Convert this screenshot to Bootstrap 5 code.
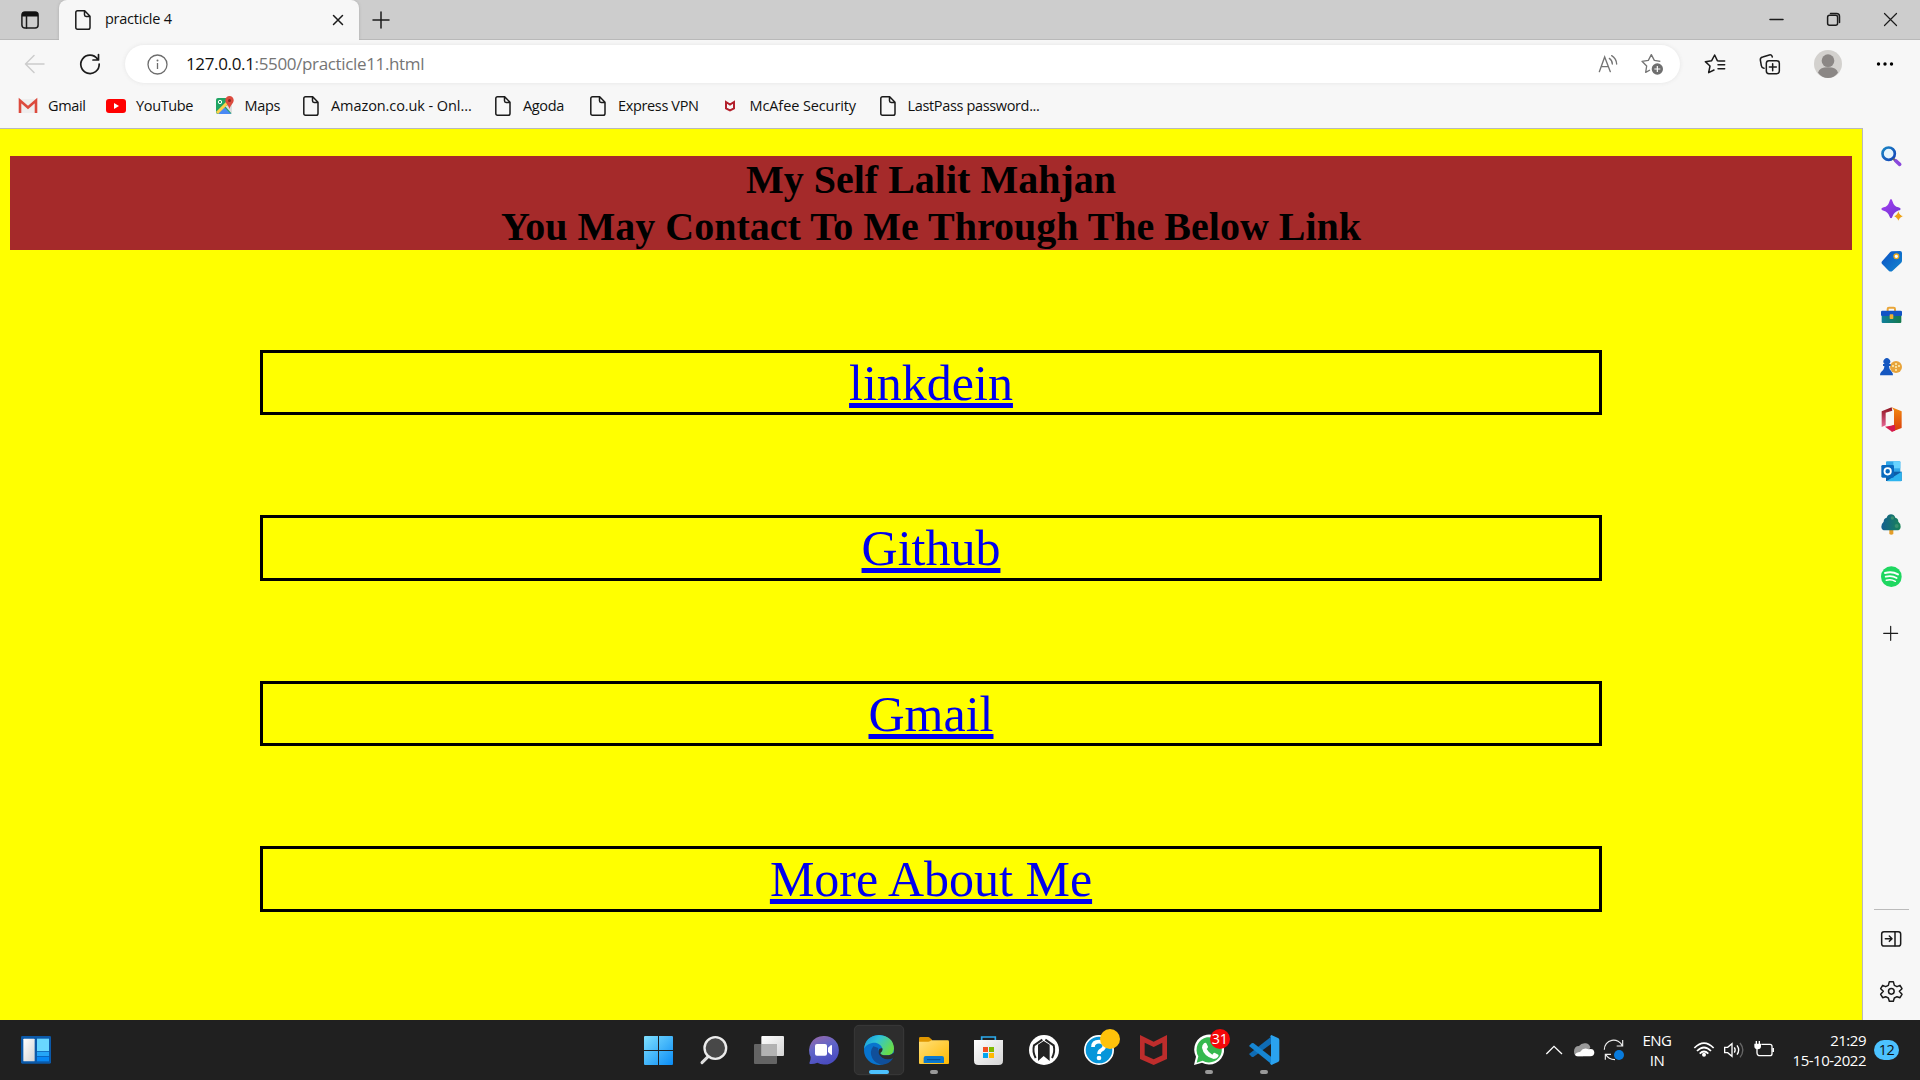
<!DOCTYPE html>
<html lang="en">
<head>
<meta charset="utf-8">
<title>practicle 4</title>
<link href="https://cdn.jsdelivr.net/npm/bootstrap@5.3.0/dist/css/bootstrap.min.css" rel="stylesheet">
<style>
body{width:1920px;height:1080px;overflow:hidden;background:#f7f7f7;font-family:"Open Sans","Noto Sans",sans-serif;color:#111}
svg{display:block;flex:none;overflow:visible}
.ln{fill:none;stroke:#1b1b1b;stroke-width:1.5;stroke-linecap:round;stroke-linejoin:round}
.tabstrip{height:40px;background:#cdcdcd;border-bottom:1px solid #b9b9b9}
.tabmenu{width:59px;padding-left:21px}
.tab-on{width:300px;height:40px;margin-bottom:-1px;background:#f7f7f7;border-radius:8px 8px 0 0;padding:0 16px 1px 16px;box-shadow:0 0 3px #aaa;clip-path:inset(0 -4px 0 -4px)}
.tab-title{font-size:14.5px;letter-spacing:-.25px;margin-left:10px;padding-bottom:1px}
.tab-plus{margin-left:13px}
.winbtns{padding-right:23px;gap:44px}
.toolbar-row{height:48px;padding:0 0 0 24px}
.urlbox{width:1555px;height:38px;background:#fff;border-radius:19px;margin-left:24px;padding:0 17px 0 22px;box-shadow:0 0 4px #e4e4e4}
.url-text{font-size:17px;letter-spacing:-.35px;margin-left:18px;color:#757575;white-space:nowrap}
.url-text b{font-weight:400;color:#111}
.bookmarks{height:40px;padding-left:18px;padding-bottom:4px}
.bm{gap:10px;font-size:14.5px;letter-spacing:-.35px;white-space:nowrap;flex:none}
.w1{width:88px}.w2{width:108.5px}.w3{width:86.5px}.w4{width:192px;letter-spacing:-.08px}.w5{width:95px}.w6{width:131.5px}.w7{width:158px;letter-spacing:-.1px}
.viewport{height:892px}
.site{width:1863px;background:#ff0;border-top:1px solid #b9b9bd;border-right:1px solid #b9b9bd;padding:27px 10px 0;font-family:"Liberation Serif",serif;text-align:center}
.site h1{font-size:40px;font-weight:700;line-height:47px;background:#a52a2a;color:#000;margin:0 0 100px}
.linkbox{margin:0 250px 100px;height:65.4px;border:3px solid #000;font-size:50px;line-height:61px}
.linkbox a{color:#00e;text-decoration:underline;text-decoration-thickness:5px;text-underline-offset:3px;text-decoration-skip-ink:none}
.sidebar-edge{width:57px}
.sidebar-edge .rule{width:35px;height:1px;background:#bbb}
.taskbar{height:60px;background:#202020;color:#fff}
.start-gap{width:580px}
.widgets{width:51px;padding-left:21px}
.langtxt{width:56px;font-size:15px;line-height:20px;letter-spacing:-.5px;text-align:center}
.clocktxt{width:86px;font-size:15px;line-height:20px;letter-spacing:-.48px;text-align:right}
.count{width:25px;height:20px;border-radius:10px;background:#4cc2ff;color:#111;font-size:14.5px;letter-spacing:-.5px;line-height:20px;text-align:center;margin-left:8px}
.tray{padding-right:21px}
</style>
<script src="https://cdn.jsdelivr.net/npm/bootstrap@5.3.0/dist/js/bootstrap.bundle.min.js"></script>
</head>
<body class="d-flex flex-column">
<svg width="0" height="0" class="position-absolute">
<defs>
<symbol id="page" viewBox="0 0 20 20"><path class="ln" d="M4.5.8h7.2L17 6.2v11.2q0 1.8-1.8 1.8H4.5q-1.7 0-1.7-1.8V2.5Q2.8.8 4.5.8zM11.5 1v3.8q0 1.6 1.6 1.6H17"/></symbol>
<linearGradient id="gw" x2="1" y2="1"><stop stop-color="#7fe0ff"/><stop offset="1" stop-color="#0a8cf5"/></linearGradient>
<linearGradient id="gwhite" x2="1" y2="1"><stop stop-color="#fff"/><stop offset="1" stop-color="#d4d4d4"/></linearGradient>
<linearGradient id="gchat" x2=".4" y2="1"><stop stop-color="#9d68a5"/><stop offset=".5" stop-color="#6166c9"/><stop offset="1" stop-color="#4b4dc0"/></linearGradient>
<linearGradient id="gedge" x2="1" y2=".5"><stop stop-color="#1593dc"/><stop offset=".45" stop-color="#2fc3d8"/><stop offset="1" stop-color="#68dc4a"/></linearGradient>
<linearGradient id="gfold" x2="1" y2="1"><stop stop-color="#ffe07a"/><stop offset="1" stop-color="#ffb900"/></linearGradient>
<linearGradient id="gblue" x2="1" y2="1"><stop stop-color="#0b4fc4"/><stop offset="1" stop-color="#1389cf"/></linearGradient>
<linearGradient id="gmag" x2="1" y2="1"><stop stop-color="#1a86c4"/><stop offset="1" stop-color="#1443b8"/></linearGradient>
<linearGradient id="gpurp" x2="1" y2="1"><stop stop-color="#a63ff4"/><stop offset="1" stop-color="#6c35ce"/></linearGradient>
<linearGradient id="gtree" x2="1"><stop stop-color="#145e91"/><stop offset="1" stop-color="#178357"/></linearGradient>
<linearGradient id="gcase" x2="1"><stop stop-color="#0f7f9c"/><stop offset="1" stop-color="#147a4c"/></linearGradient>
<linearGradient id="goff" x2="0" y2="1"><stop stop-color="#f28a10"/><stop offset="1" stop-color="#d93a0c"/></linearGradient>
<linearGradient id="goffl" x2="0" y2="1"><stop stop-color="#8e1420"/><stop offset="1" stop-color="#e66594"/></linearGradient>
</defs>
</svg>

<header>
<div class="tabstrip d-flex align-items-center">
  <div class="tabmenu"><svg width="18" height="18" viewBox="0 0 18 18"><rect x=".9" y=".9" width="16.2" height="16.2" rx="3" class="ln" stroke-width="1.7"/><path d="M1 5.5V3q0-2 2-2h12q2 0 2 2v2.500z" fill="#111"/><path class="ln" d="M5.500 5v12"/></svg></div>
  <div class="tab-on d-flex align-items-center align-self-start">
    <svg width="20" height="20"><use href="#page" x="-2"/></svg>
    <span class="tab-title">practicle 4</span>
    <svg class="ms-auto" width="10" height="10" viewBox="0 0 10 10"><path class="ln" d="M.5.5l9 9m0-9l-9 9"/></svg>
  </div>
  <svg class="tab-plus" width="18" height="18" viewBox="0 0 18 18"><path class="ln" d="M9 1v16M1 9h16"/></svg>
  <div class="winbtns d-flex align-items-center ms-auto">
    <svg width="13" height="13" viewBox="0 0 13 13"><path class="ln" stroke-linecap="butt" d="M0 6.500h13"/></svg>
    <svg width="13" height="13" viewBox="0 0 13 13"><rect class="ln" x=".6" y="2.200" width="10" height="10" rx="2"/><path class="ln" d="M3.500.4h6q3 0 3 3v6"/></svg>
    <svg width="13" height="13" viewBox="0 0 13 13"><path class="ln" style="stroke-width:1.2" d="M.5.5l12 12m0-12l-12 12"/></svg>
  </div>
</div>
<div class="toolbar-row d-flex align-items-center">
  <svg width="21" height="20" viewBox="0 0 21 20"><path class="ln" style="stroke:#ccc" d="M20 10H1.500M10 1.500L1.500 10l8.500 8.500"/></svg>
  <svg width="22" height="22" viewBox="0 0 22 22" style="margin-left:34px"><path class="ln" style="stroke-width:1.7" d="M18.500 6A9.200 9.200 0 1 0 20.200 11M19.500 1.500v5.500h-5.500"/></svg>
  <div class="urlbox d-flex align-items-center">
    <svg width="21" height="21" viewBox="0 0 21 21"><g fill="none" stroke="#6d6d6d" stroke-width="1.300"><circle cx="10.500" cy="10.500" r="9.500"/><path d="M10.500 9v6"/></g><circle cx="10.500" cy="6.500" r="1" fill="#6d6d6d"/></svg>
    <span class="url-text"><b>127.0.0.1</b>:5500/practicle11.html</span>
    <svg class="ms-auto" width="20" height="20" viewBox="110 160 60 60"><g fill="none" stroke="#747474" stroke-width="4" stroke-linecap="round"><path d="M114 213l16-44 17 44M120 198h21M144 173q9 6 9 17M151 165q14 9 15 25"/></g></svg>
    <svg width="22" height="22" viewBox="242 160 66 66" style="margin-left:23px"><path fill="none" stroke="#747474" stroke-width="4" stroke-linejoin="round" d="M300 185l-18-3-9-17-9 17-19 3 14 14-3 19 13-7"/><circle cx="291" cy="208" r="17" fill="#6f6f6f"/><path stroke="#fff" stroke-width="3.500" d="M282 208h18M291 199v18"/></svg>
  </div>
  <svg width="22" height="22" viewBox="433 158 66 66" style="margin-left:24px"><path class="ln" style="stroke-width:4.500" d="M479 182l-6-1-8-17-9 17-19 3 14 13-4 20 16-8M475 182h20M475 193h20M475 205h20"/></svg>
  <svg width="22" height="22" viewBox="598 158 66 66" style="margin-left:33px"><g class="ln" style="stroke-width:4.500"><rect x="620" y="181" width="39" height="39" rx="8"/><path d="M639 190v21M629 200h21M613 204q-7-1-8-8l-3-17q-1-7 7-9l20-6q7-2 9 6"/></g></svg>
  <svg width="28" height="28" viewBox="762 150 84 84" style="margin-left:33px"><circle cx="804" cy="192" r="42" fill="#d3d1ce"/><circle cx="804" cy="182" r="19" fill="#8b8785"/><path d="M774 218q4-16 30-16t30 16q-12 16-30 16t-30-16z" fill="#8b8785"/></svg>
  <svg width="18" height="6" viewBox="0 0 18 6" style="margin-left:34px"><circle cx="2.500" cy="3" r="1.700"/><circle cx="9" cy="3" r="1.700"/><circle cx="15.500" cy="3" r="1.700"/></svg>
</div>
<nav class="bookmarks d-flex align-items-center">
  <div class="bm w1 d-flex align-items-center"><svg width="20" height="20" viewBox="0 0 20 20"><path fill="#eee" d="M1 3h18v14H1z"/><path d="M2 17V4.500l8 7 8-7V17" fill="none" stroke="#dc4a3d" stroke-width="2.600"/></svg>Gmail</div>
  <div class="bm w2 d-flex align-items-center"><svg width="20" height="20" viewBox="0 0 20 20"><rect y="3" width="20" height="14" rx="3" fill="red"/><path d="M8 7l5 3-5 3z" fill="#fff"/></svg>YouTube</div>
  <div class="bm w3 d-flex align-items-center"><svg width="20" height="20" viewBox="0 0 20 20"><rect x="1" y="2" width="16" height="16" rx="2" fill="#1fa463"/><path fill="#4a89f3" d="M3 18l6-7 7 7z"/><path fill="#ddd" d="M10 10l7-2v10z"/><path stroke="#ffd04b" stroke-width="3" d="M2 17L15 4"/><path fill="#dc4b3e" d="M14.500 0a4.200 4.200 0 0 1 4.200 4.300c0 3-3 4.400-4.200 8.700-1.200-4.300-4.200-5.700-4.200-8.700A4.200 4.200 0 0 1 14.500 0z"/><circle cx="14.500" cy="4.500" r="1.500" fill="#8c2a22"/><circle cx="5" cy="6" r="1.700" fill="none" stroke="#fff"/></svg>Maps</div>
  <div class="bm w4 d-flex align-items-center"><svg width="20" height="20"><use href="#page"/></svg>Amazon.co.uk - Onl...</div>
  <div class="bm w5 d-flex align-items-center"><svg width="20" height="20"><use href="#page"/></svg>Agoda</div>
  <div class="bm w6 d-flex align-items-center"><svg width="20" height="20"><use href="#page"/></svg>Express VPN</div>
  <div class="bm w7 d-flex align-items-center"><svg width="20" height="20" viewBox="0 0 20 20"><path d="M6 6l4 2.500L14 6v6.500L10 14.500 6 12.500z" fill="none" stroke="#b3202c" stroke-width="2"/></svg>McAfee Security</div>
  <div class="bm d-flex align-items-center"><svg width="20" height="20"><use href="#page"/></svg>LastPass password...</div>
</nav>
</header>

<div class="viewport d-flex">
<main class="site">
  <h1>My Self Lalit Mahjan<br>You May Contact To Me Through The Below Link</h1>
  <div class="linkbox"><a href="#">linkdein</a></div>
  <div class="linkbox"><a href="#">Github</a></div>
  <div class="linkbox"><a href="#">Gmail</a></div>
  <div class="linkbox"><a href="#">More About Me</a></div>
</main>
<aside class="sidebar-edge d-flex flex-column align-items-center">
  <svg width="57" height="54" viewBox="39 24 171 162"><circle cx="116" cy="101" r="18.500" fill="#e6f5fc" stroke="url(#gmag)" stroke-width="8"/><path d="M130 116l8 8" stroke="#666" stroke-width="7"/><path d="M138 123l11 10" stroke="#8b48dc" stroke-width="11" stroke-linecap="round"/></svg>
  <svg width="57" height="54" viewBox="39 186 171 162"><path fill="url(#gpurp)" d="M123 237q3 0 5 8 4 14 17 17 7 2 7 5t-7 5q-13 4-17 16-2 7-5 7t-5-7q-4-12-17-16-7-2-7-5t7-5q13-3 17-17 2-8 5-8z"/><path fill="#eda317" stroke="#f7f7f7" stroke-width="2" d="M145 272q3 13 15 17-12 4-15 15-3-11-14-15 11-4 14-17z"/></svg>
  <svg width="57" height="50" viewBox="39 348 171 150"><path fill="url(#gblue)" d="M126 394l24-1q6 0 6 6v23q0 4-3 7l-25 23q-6 5-12 0l-19-19q-5-5 0-10l23-26q3-3 6-3z"/><circle cx="139" cy="409" r="7" fill="#fff" stroke="#eda91a" stroke-width="4"/></svg>
  <svg width="57" height="55" viewBox="39 498 171 165"><path fill="none" stroke="#e9a63a" stroke-width="6" d="M113 575v-8q0-4 4-4h14q4 0 4 4v8"/><rect x="95" y="577" width="59" height="32" rx="3" fill="url(#gcase)"/><rect x="93" y="572" width="63" height="16" rx="4" fill="#1153c5"/><rect x="119" y="583" width="11" height="14" rx="2" fill="#efaf32"/></svg>
  <svg width="57" height="51" viewBox="39 663 171 153"><circle cx="138" cy="741" r="18" fill="#e8a43b"/><g fill="#fff2bd"><circle cx="138" cy="732" r="3"/><circle cx="138" cy="750" r="3"/><circle cx="129" cy="738" r="3"/><circle cx="147" cy="738" r="3"/><circle cx="138" cy="741" r="3"/></g><path fill="#1557c0" d="M99 732h5a10 10 0 1 1 13 0h5v6h-5q0 11 8 17 4 3 4 11H90q0-8 4-11 9-6 9-17h-4z"/></svg>
  <svg width="57" height="53" viewBox="39 36 171 159"><path fill="url(#goffl)" d="M125 82l-30 12v47l12-5V98l20-6z"/><path fill="url(#goff)" d="M125 82l30 12v50l-30 11v-18l7-3V91z"/><path fill="#d51950" d="M105 140l30-5v17l-9 3z"/></svg>
  <svg width="57" height="53" viewBox="39 195 171 159"><rect x="108" y="244" width="43" height="44" rx="3" fill="#30a7e8"/><path fill="#67d3ff" d="M130 244h21v21h-21z"/><path fill="#0e5ea8" d="M108 275h47v28h-47z"/><path fill="#2db4ef" d="M110 303l45-28v26q0 3-3 3h-39z"/><rect x="94" y="255" width="38" height="38" rx="4" fill="#0869be"/><circle cx="113" cy="274" r="9.500" fill="none" stroke="#fff" stroke-width="5.500"/></svg>
  <svg width="57" height="53" viewBox="39 354 171 159"><path fill="#e59e28" d="M118 448h12v14q-6 5-12 0z"/><path fill="url(#gtree)" d="M123 403q9 0 13 10 9 2 9 12 8 6 7 15 0 11-12 11h-34q-12 0-12-11 0-9 7-15 0-10 9-12 4-10 13-10z"/><g fill="#39906f"><circle cx="127" cy="414" r="5"/><circle cx="140" cy="438" r="6"/></g></svg>
  <svg width="57" height="52" viewBox="39 512 171 156"><circle cx="124" cy="589" r="31" fill="#1ed760"/><g fill="none" stroke="#fff" stroke-linecap="round"><path stroke-width="6" d="M105 578q21-6 39 4"/><path stroke-width="5" d="M107 589q18-5 33 4"/><path stroke-width="4.500" d="M109 600q14-4 27 3"/></g></svg>
  <svg width="57" height="60" viewBox="39 669 171 180"><path class="ln" style="stroke-width:3.500" d="M122 739v42M101 760h42"/></svg>
  <div class="rule mt-auto"></div>
  <svg width="57" height="58" viewBox="69 90 171 174"><g class="ln" style="stroke-width:4.500"><rect x="125" y="155" width="57" height="43" rx="7"/><path d="M165 156v41M136 176h19M148 168l8 8-8 8"/></g></svg>
  <svg width="57" height="52" viewBox="69 264 171 156"><g class="ln" style="stroke-width:4.500"><circle cx="154" cy="334" r="8.500"/><path d="M148 305h12l3 11 8 4 9-4 6 10-8 8 8 9-6 10-9-3-8 4-3 10h-12l-3-10-8-4-9 3-6-10 8-9-8-8 6-10 9 4 8-4z"/></g></svg>
</aside>
</div>

<footer class="taskbar d-flex align-items-center">
  <div class="widgets"><svg width="30" height="28" viewBox="63 63 90 84"><rect x="63" y="63" width="90" height="83" rx="4" fill="#0b59a9"/><rect x="70" y="71" width="34" height="68" rx="2" fill="url(#gwhite)"/><path fill="#69d7ff" d="M111 71h36v37h-36z"/><path fill="#25a5f7" d="M111 110h36v13h-36z"/><path fill="#0787f4" d="M111 125h36v14h-36z"/></svg></div>
  <div class="start-gap"></div>
  <svg width="55" height="60" viewBox="33 15 165 180"><path fill="url(#gw)" d="M75 63h39v42H72V66q0-3 3-3zM117 63h39q3 0 3 3v39h-42zM72 108h42v42H75q-3 0-3-3zM117 108h42v39q0 3-3 3h-39z"/></svg>
  <svg width="55" height="60" viewBox="198 15 165 180"><path d="M265 124l-19 19" stroke="#dedede" stroke-width="9" stroke-linecap="round"/><circle cx="286" cy="99" r="32.500" fill="#484848" stroke="#ececec" stroke-width="7"/></svg>
  <svg width="55" height="60" viewBox="363 15 165 180"><rect x="424" y="63" width="68" height="60" rx="3" fill="url(#gwhite)"/><rect x="402" y="87" width="69" height="60" rx="3" fill="#777" opacity=".78"/><path fill="#b2b2b2" d="M424 87h47v36h-47z"/></svg>
  <svg width="55" height="60" viewBox="528 15 165 180"><path fill="url(#gchat)" d="M610 63a43 43 0 1 1-18 80q-10 5-21 4-5 0-2-6 3-6 3-15A43 43 0 0 1 610 63z"/><rect x="585" y="87" width="36" height="35" rx="6" fill="#fff"/><path fill="#fff" d="M624 98l9-8q3-1 3 3v24q0 4-3 2l-9-8z"/></svg>
  <svg width="55" height="60" viewBox="693 15 165 180"><rect x="703" y="31" width="148" height="148" rx="14" fill="#2d2d2d" stroke="#393939" stroke-width="3"/><circle cx="777" cy="105" r="45" fill="#0874ce"/><path fill="#104f9a" d="M760 94q-13 16-3 36 10 18 30 19 22-2 33-21 3-6-3-4-18 8-32-1-14-10-10-24z"/><path fill="url(#gedge)" d="M732 103q3-40 45-43 43 3 45 41-1 20-23 20-18 0-18-7c0-5 8-5 6-14-3-11-17-20-31-16-14 3-21 10-24 19z"/><path fill="#2d2d2d" d="M787 100q2 9-6 14 0 7 18 7 14 0 21-8 3 3 5 9l-3 6q-20 9-35 0-14-9-11-22 2-8 11-6z"/><rect x="747" y="165" width="60" height="12" rx="6" fill="#4cc2ff"/></svg>
  <svg width="55" height="60" viewBox="858 15 165 180"><path fill="#df9600" d="M897 81V70q0-4 4-4h23q4 0 6 3l6 5v12h-39z"/><path fill="url(#gfold)" d="M897 80h28q5 0 10-4h48q4 0 4 4v64q0 3-3 3h-84q-3 0-3-3z"/><path fill="#0b79cf" d="M911 144v-15q0-6 6-6h49q6 0 6 6v15z"/><path stroke="#064e91" stroke-width="3" d="M921 134h40"/><rect x="930" y="165" width="24" height="12" rx="6" fill="#999"/></svg>
  <svg width="55" height="60" viewBox="33 15 165 180"><path fill="none" stroke="#2babed" stroke-width="5" d="M95 82V66h41v16"/><path fill="url(#gwhite)" d="M72 75h87v62q0 13-13 13H85q-13 0-13-13z"/><path fill="#f25022" d="M99 96h15v15H99z"/><path fill="#7fba00" d="M117 96h15v15h-15z"/><path fill="#00a4ef" d="M99 114h15v15H99z"/><path fill="#ffb900" d="M117 114h15v15h-15z"/></svg>
  <svg width="55" height="60" viewBox="198 15 165 180"><circle cx="282" cy="105" r="45" fill="#fff"/><path fill="#222" d="M264 138V89l17-11 18 11v49l-18-15z"/><path fill="none" stroke="#222" stroke-width="6" d="M257 129q-10-18-5-38l25-17M306 129q10-18 5-38l-25-17"/></svg>
  <svg width="55" height="60" viewBox="363 15 165 180"><circle cx="447" cy="105" r="42.500" fill="#0796da" stroke="#fff" stroke-width="5"/><path d="M429 96q0-16 18-16 16 0 16 13 0 7-9 12-7 4-7 12" fill="none" stroke="#fff" stroke-width="11"/><circle cx="447" cy="129" r="7" fill="#fff"/><circle cx="480" cy="72" r="30" fill="#ffc20a"/></svg>
  <svg width="55" height="60" viewBox="528 15 165 180"><path fill="#be2d2c" fill-rule="evenodd" d="M570 60l41 20 40-20v72l-40 18-41-18zM584 83v38l27 12 26-12V83l-26 13z"/></svg>
  <svg width="55" height="60" viewBox="693 15 165 180"><path fill="#fff" d="M732 150l6-25a45 45 0 1 1 18 18z"/><path fill="#36b94f" d="M740 143l5-19a38 38 0 1 1 13 13z"/><path fill="#fff" d="M762 85q5-4 8 1l4 9q0 4-4 7 6 11 17 17 4-7 8-5l10 5q2 2-1 7-5 6-13 6-30-8-35-34 0-8 6-13z"/><circle cx="810" cy="72" r="30" fill="#f50808"/><text x="809" y="87" font-size="43" text-anchor="middle" fill="#fff" font-family="Open Sans" letter-spacing="-1">31</text><rect x="765" y="165" width="24" height="12" rx="6" fill="#999"/></svg>
  <svg width="55" height="60" viewBox="858 15 165 180"><path fill="#0f6cb5" d="M897 117l8 8q3 2 6 0l56-41V62z"/><path fill="#1686d3" d="M897 93l8-8q3-2 6 0l56 43v21z"/><path fill="#2aa2ee" d="M964 60l20 9q4 2 4 6v60q0 4-4 6l-20 9-5-5q4 1 4-4V69q0-5-4-4z"/><rect x="930" y="165" width="24" height="12" rx="6" fill="#999"/></svg>
  <div class="tray d-flex align-items-center ms-auto">
    <svg width="30" height="60" viewBox="27 15 90 180"><path fill="none" stroke="#fff" stroke-width="4" d="M49 117l23-23 24 23"/></svg>
    <svg width="30" height="60" viewBox="117 15 90 180"><path fill="#999" d="M132 110q0-17 15-17 7-10 21-8 11 2 13 13l-22 26h-12q-15 0-15-14z"/><path fill="#fff" d="M135 119q4-8 15-8 11-15 25-8 16-5 18 9 0 12-12 12h-37q-7 0-9-5z"/></svg>
    <svg width="30" height="60" viewBox="207 15 90 180"><g fill="none" stroke="#eee" stroke-width="3.500"><path d="M223 104a28 28 0 0 1 54-11M278 75v18h-18M255 134q-20 0-28-16M226 134v-16h17"/></g><circle cx="267" cy="120" r="15" fill="#087bdd"/></svg>
    <div class="langtxt">ENG<br>IN</div>
    <svg width="35" height="60" viewBox="465 15 105 180"><g fill="none" stroke="#fff" stroke-width="5"><path d="M493 99q29-29 58 0M501 108q21-21 42 0M509 116q13-13 26 0"/></g><circle cx="522" cy="119" r="6" fill="#fff"/></svg>
    <svg width="30" height="60" viewBox="570 15 90 180"><g fill="none" stroke="#fff" stroke-width="4"><path d="M584 97h9l13-11v38l-13-11h-9zM613 97q5 8 0 16M621 91q10 14 0 28"/><path stroke="#666" d="M630 84q17 21 0 43"/></g></svg>
    <svg width="30" height="60" viewBox="660 15 90 180"><path fill="none" stroke="#fff" stroke-width="4" d="M694 88h26q6 0 6 6v22q0 6-6 6h-29q-10 0-10-9v-12"/><path fill="#fff" d="M673 86h4v-8h4v8h5v-8h4v8h3v8q0 9-10 9t-10-9zM727 99h5v12h-5z"/></svg>
    <div class="clocktxt">21:29<br>15-10-2022</div>
    <div class="count">12</div>
  </div>
</footer>
</body>
</html>
